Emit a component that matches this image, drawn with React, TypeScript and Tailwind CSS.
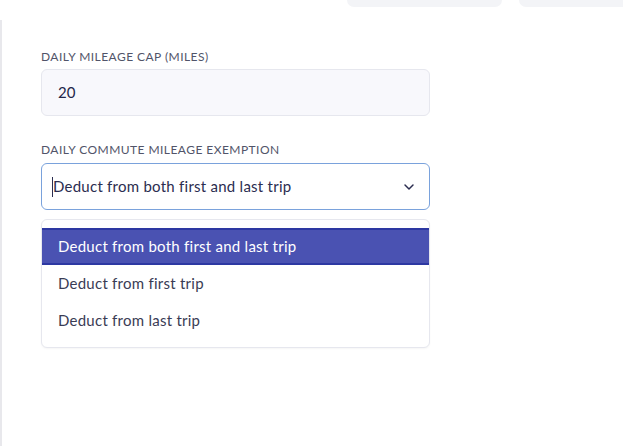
import React from "react";
import { ChevronDown } from "lucide-react";

const options = [
  "Deduct from both first and last trip",
  "Deduct from first trip",
  "Deduct from last trip",
];

export default function App() {
  const selected = 0;
  return (
    <div className="relative w-[623px] h-[446px] bg-white overflow-hidden font-['Lato',sans-serif]">
      {/* top tabs peeking in */}
      <div className="absolute top-0 left-[347px] flex gap-[17px]">
        <div className="w-[155px] h-[7px] bg-[#f3f4f7] rounded-b-[8px]" />
        <div className="w-[120px] h-[7px] bg-[#f3f4f7] rounded-b-[8px]" />
      </div>

      <div className="mt-[20px] h-[426px] border-l-2 border-[#e8e8ec] pl-[39px] pt-[29px]">
        <div className="w-[389px]">
          <label className="block text-[12px] leading-[16px] tracking-[0.45px] uppercase text-[#515469]">
            Daily Mileage Cap (Miles)
          </label>
          <div className="mt-[4px] h-[47px] rounded-[6px] border border-[#e6e7ee] bg-[#f8f8fc] flex items-center px-[16px] text-[15px] text-[#23264a]">
            20
          </div>

          <label className="block mt-[26px] text-[12px] leading-[16px] tracking-[0.45px] uppercase text-[#515469]">
            Daily Commute Mileage Exemption
          </label>
          <div className="mt-[5px] h-[47px] rounded-[6px] border border-[#7aa2dc] bg-white flex items-center pl-[10px] pr-[12px] text-[15px] tracking-[0.25px] text-[#2b2d50]">
            <span className="w-px h-[20px] bg-[#2b2d50]" />
            <span className="flex-1">{options[selected]}</span>
            <ChevronDown className="w-[16px] h-[16px] text-[#2b2d50]" strokeWidth={2.2} />
          </div>

          <div className="mt-[9px] rounded-[6px] border border-[#e6e7ee] bg-white pt-[8px] pb-[8px] shadow-[0_1px_2px_rgba(0,0,0,0.04)]">
            {options.map((o, i) => (
              <div
                key={o}
                className={
                  i === selected
                    ? "h-[37px] flex items-center px-[16px] text-[15px] tracking-[0.25px] bg-[#4a52b2] text-white border-y-2 border-[#2d38a2]"
                    : "h-[37px] flex items-center px-[16px] text-[15px] tracking-[0.25px] text-[#3a3c55]"
                }
              >
                {o}
              </div>
            ))}
          </div>
        </div>
      </div>
    </div>
  );
}
